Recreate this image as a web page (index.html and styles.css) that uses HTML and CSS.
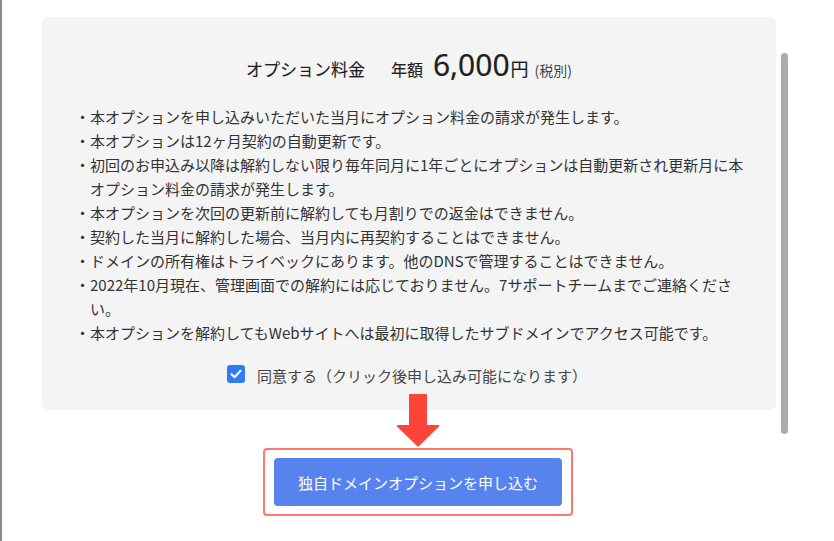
FILE: index.html
```html
<!DOCTYPE html>
<html lang="ja">
<head>
    <meta charset="UTF-8">
    <meta name="viewport" content="width=device-width, initial-scale=1.0">
    <title>独自ドメインオプション</title>
    <link rel="stylesheet" href="styles.css">
</head>
<body>

    <div class="page">
        <section class="option-panel">
            <h2 class="price">
                <span class="price-label">オプション料金</span>
                <span class="price-year">年額</span>
                <span class="price-num">6,000</span><span class="price-yen">円</span>
                <span class="price-tax">(税別)</span>
            </h2>

            <ul class="notes">
                <li>本オプションを申し込みいただいた当月にオプション料金の請求が発生します。</li>
                <li>本オプションは12ヶ月契約の自動更新です。</li>
                <li>初回のお申込み以降は解約しない限り毎年同月に1年ごとにオプションは自動更新され更新月に本オプション料金の請求が発生します。</li>
                <li>本オプションを次回の更新前に解約しても月割りでの返金はできません。</li>
                <li>契約した当月に解約した場合、当月内に再契約することはできません。</li>
                <li>ドメインの所有権はトライベックにあります。他のDNSで管理することはできません。</li>
                <li>2022年10月現在、管理画面での解約には応じておりません。7サポートチームまでご連絡ください。</li>
                <li>本オプションを解約してもWebサイトへは最初に取得したサブドメインでアクセス可能です。</li>
            </ul>

            <label class="agree">
                <span class="check">
                    <svg width="12" height="10" viewBox="0 0 12 10"><path d="M1.5 5.2 L4.6 8.2 L10.5 1.8" fill="none" stroke="#fff" stroke-width="2" stroke-linecap="round" stroke-linejoin="round"/></svg>
                </span>
                同意する（クリック後申し込み可能になります）
            </label>
        </section>
    </div>

    <div class="apply">
        <svg class="arrow" width="44" height="53" viewBox="0 0 44 53">
            <path d="M13 1 Q13 0 14 0 L30 0 Q31 0 31 1 L31 31 L42 31 Q44 31 43 32.5 L23 52 Q22 53 21 52 L1 32.5 Q0 31 2 31 L13 31 Z" fill="#fa4538"/>
        </svg>
        <div class="apply-frame">
            <button class="apply-btn">独自ドメインオプションを申し込む</button>
        </div>
    </div>

    <div class="scrollbar"></div>

</body>
</html>
```

FILE: styles.css
```css
body {
    font-family: "Noto Sans CJK JP", "Noto Sans", sans-serif;
    margin: 0;
    height: 541px;
    box-sizing: border-box;
    border-left: 2px solid #8c8c8c;
    background-color: #fff;
    color: #333;
    position: relative;
    overflow: hidden;
}

.page {
    padding: 17px 58px 0 40px;
}

.option-panel {
    background-color: #f4f4f4;
    border-radius: 6px;
    padding: 28px 29px 23px 33px;
}

.price {
    margin: 0 0 20px;
    height: 40px;
    display: flex;
    align-items: baseline;
    justify-content: center;
    font-weight: normal;
    line-height: 40px;
    color: #1f1f1f;
    padding-right: 4px;
}

.price-label {
    font-size: 17px;
    margin-right: 26px;
    -webkit-text-stroke: 0.15px #1f1f1f;
}

.price-year {
    font-size: 16px;
    margin-right: 10px;
    -webkit-text-stroke: 0.15px #1f1f1f;
}

.price-num {
    font-family: "Noto Sans", sans-serif;
    font-size: 30px;
    margin-right: 1px;
    -webkit-text-stroke: 0.2px #1f1f1f;
}

.price-yen {
    font-size: 18px;
    margin-right: 6px;
    -webkit-text-stroke: 0.15px #1f1f1f;
}

.price-tax {
    font-size: 14px;
    color: #444;
}

.notes {
    list-style: none;
    margin: 0;
    padding: 0;
    font-size: 15px;
    line-height: 24px;
}

.notes li {
    padding-left: 1em;
    text-indent: -1em;
}

.notes li::before {
    content: "・";
}

.agree {
    display: flex;
    align-items: center;
    justify-content: center;
    margin-top: 18px;
    height: 24px;
    font-size: 15px;
    color: #444;
    padding-right: 8px;
}

.check {
    width: 18px;
    height: 18px;
    border-radius: 3px;
    background-color: #3279f5;
    display: flex;
    align-items: center;
    justify-content: center;
    margin-right: 12px;
    margin-top: -3px;
}

.apply {
    display: flex;
    flex-direction: column;
    align-items: center;
}

.arrow {
    display: block;
    margin-top: -16px;
    margin-bottom: 1px;
}

.apply-frame {
    border: 2px solid #ff776d;
    border-radius: 4px;
    padding: 8px 9px;
}

.apply-btn {
    display: block;
    width: 288px;
    height: 48px;
    border: none;
    border-radius: 4px;
    background-color: #5783ef;
    color: #fff;
    font-family: "Noto Sans CJK JP", sans-serif;
    font-size: 15px;
    cursor: pointer;
}

.scrollbar {
    position: absolute;
    left: 779px;
    top: 53px;
    width: 7px;
    height: 381px;
    border-radius: 4px;
    background-color: #ababab;
}
```
